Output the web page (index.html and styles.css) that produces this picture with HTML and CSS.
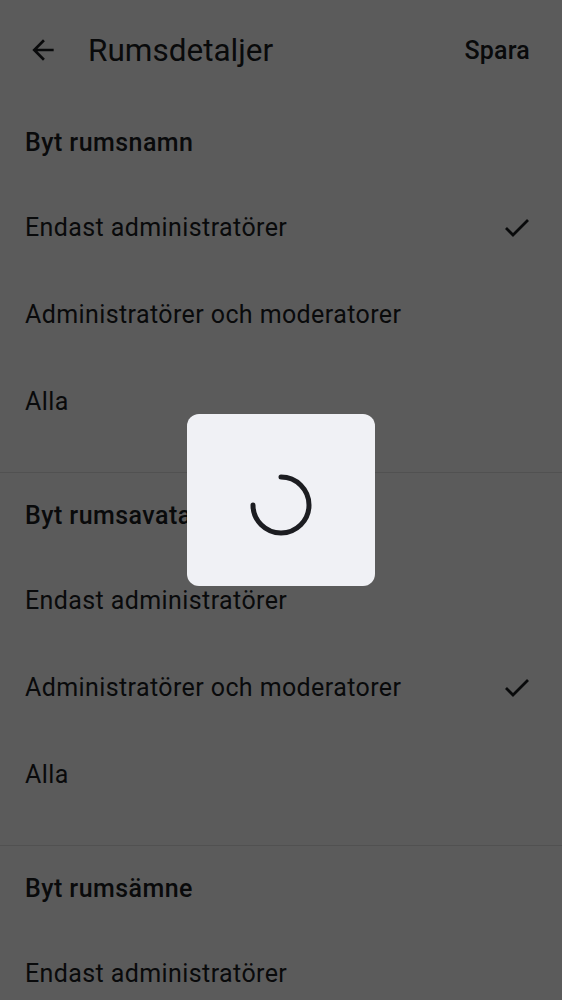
FILE: index.html
```html
<!DOCTYPE html>
<html lang="sv">
<head>
<meta charset="utf-8">
<link rel="stylesheet" href="styles.css">
</head>
<body>
<div class="page">
  <header class="topbar">
    <svg class="back" viewBox="0 0 24 24" width="32" height="32"><path d="M20 11H7.83l5.59-5.59L12 4l-8 8 8 8 1.41-1.41L7.83 13H20v-2z" fill="currentColor"/></svg>
    <h1 class="title">Rumsdetaljer</h1>
    <span class="save">Spara</span>
  </header>

  <section class="section">
    <div class="sec-head">Byt rumsnamn</div>
    <div class="opt"><span>Endast administratörer</span><svg class="check" viewBox="0 0 26 20" width="26" height="20"><polyline points="2,10 9,17 24,2" fill="none" stroke="currentColor" stroke-width="2.8"/></svg></div>
    <div class="opt"><span>Administratörer och moderatorer</span></div>
    <div class="opt"><span>Alla</span></div>
  </section>
  <section class="section">
    <div class="sec-head">Byt rumsavatar</div>
    <div class="opt"><span>Endast administratörer</span></div>
    <div class="opt"><span>Administratörer och moderatorer</span><svg class="check" viewBox="0 0 26 20" width="26" height="20"><polyline points="2,10 9,17 24,2" fill="none" stroke="currentColor" stroke-width="2.8"/></svg></div>
    <div class="opt"><span>Alla</span></div>
  </section>
  <section class="section last">
    <div class="sec-head">Byt rumsämne</div>
    <div class="opt"><span>Endast administratörer</span></div>
  </section>
</div>

<div class="scrim">
  <div class="dialog">
    <svg class="spinner" viewBox="0 0 64 64" width="64" height="64"><path d="M32 4 A28 28 0 1 1 4 32" fill="none" stroke="currentColor" stroke-width="5" stroke-linecap="round"/></svg>
  </div>
</div>
</body>
</html>
```
FILE: styles.css
```css
html, body {
  margin: 0;
  padding: 0;
  background: #ffffff;
}
body {
  font-family: Roboto, "Noto Sans", sans-serif;
  color: #1b1c1f;
  overflow: hidden;
  height: 1000px;
}
.page {
  width: 562px;
}
.topbar {
  height: 100px;
  display: flex;
  align-items: center;
  padding: 0 32px 0 27px;
  box-sizing: border-box;
}
.back {
  display: block;
  margin-right: 29px;
}
.title {
  margin: 0;
  font-size: 31.5px;
  font-weight: 400;
  flex: 1;
  letter-spacing: 0;
}
.save {
  font-size: 25px;
  font-weight: 500;
  letter-spacing: 0.2px;
}
.section {
  padding-bottom: 27px;
  border-bottom: 1px solid #e2e2e4;
}
.section.last {
  padding-bottom: 0;
  border-bottom: 0;
}
.sec-head {
  height: 84px;
  display: flex;
  align-items: center;
  padding-left: 25px;
  font-size: 25px;
  font-weight: 500;
  letter-spacing: 0.45px;
}
.opt {
  height: 87px;
  display: flex;
  align-items: center;
  justify-content: space-between;
  padding: 0 32px 0 25px;
  font-size: 25px;
  font-weight: 400;
  letter-spacing: 0.4px;
}
.check {
  display: block;
}
.scrim {
  position: fixed;
  inset: 0;
  background: rgba(0, 0, 0, 0.643);
  display: flex;
  align-items: center;
  justify-content: center;
}
.dialog {
  width: 188px;
  height: 172px;
  background: #f0f1f5;
  border-radius: 12px;
  display: flex;
  align-items: center;
  justify-content: center;
}
.spinner {
  display: block;
  color: #1c1d21;
  margin-top: 10px;
}
```
